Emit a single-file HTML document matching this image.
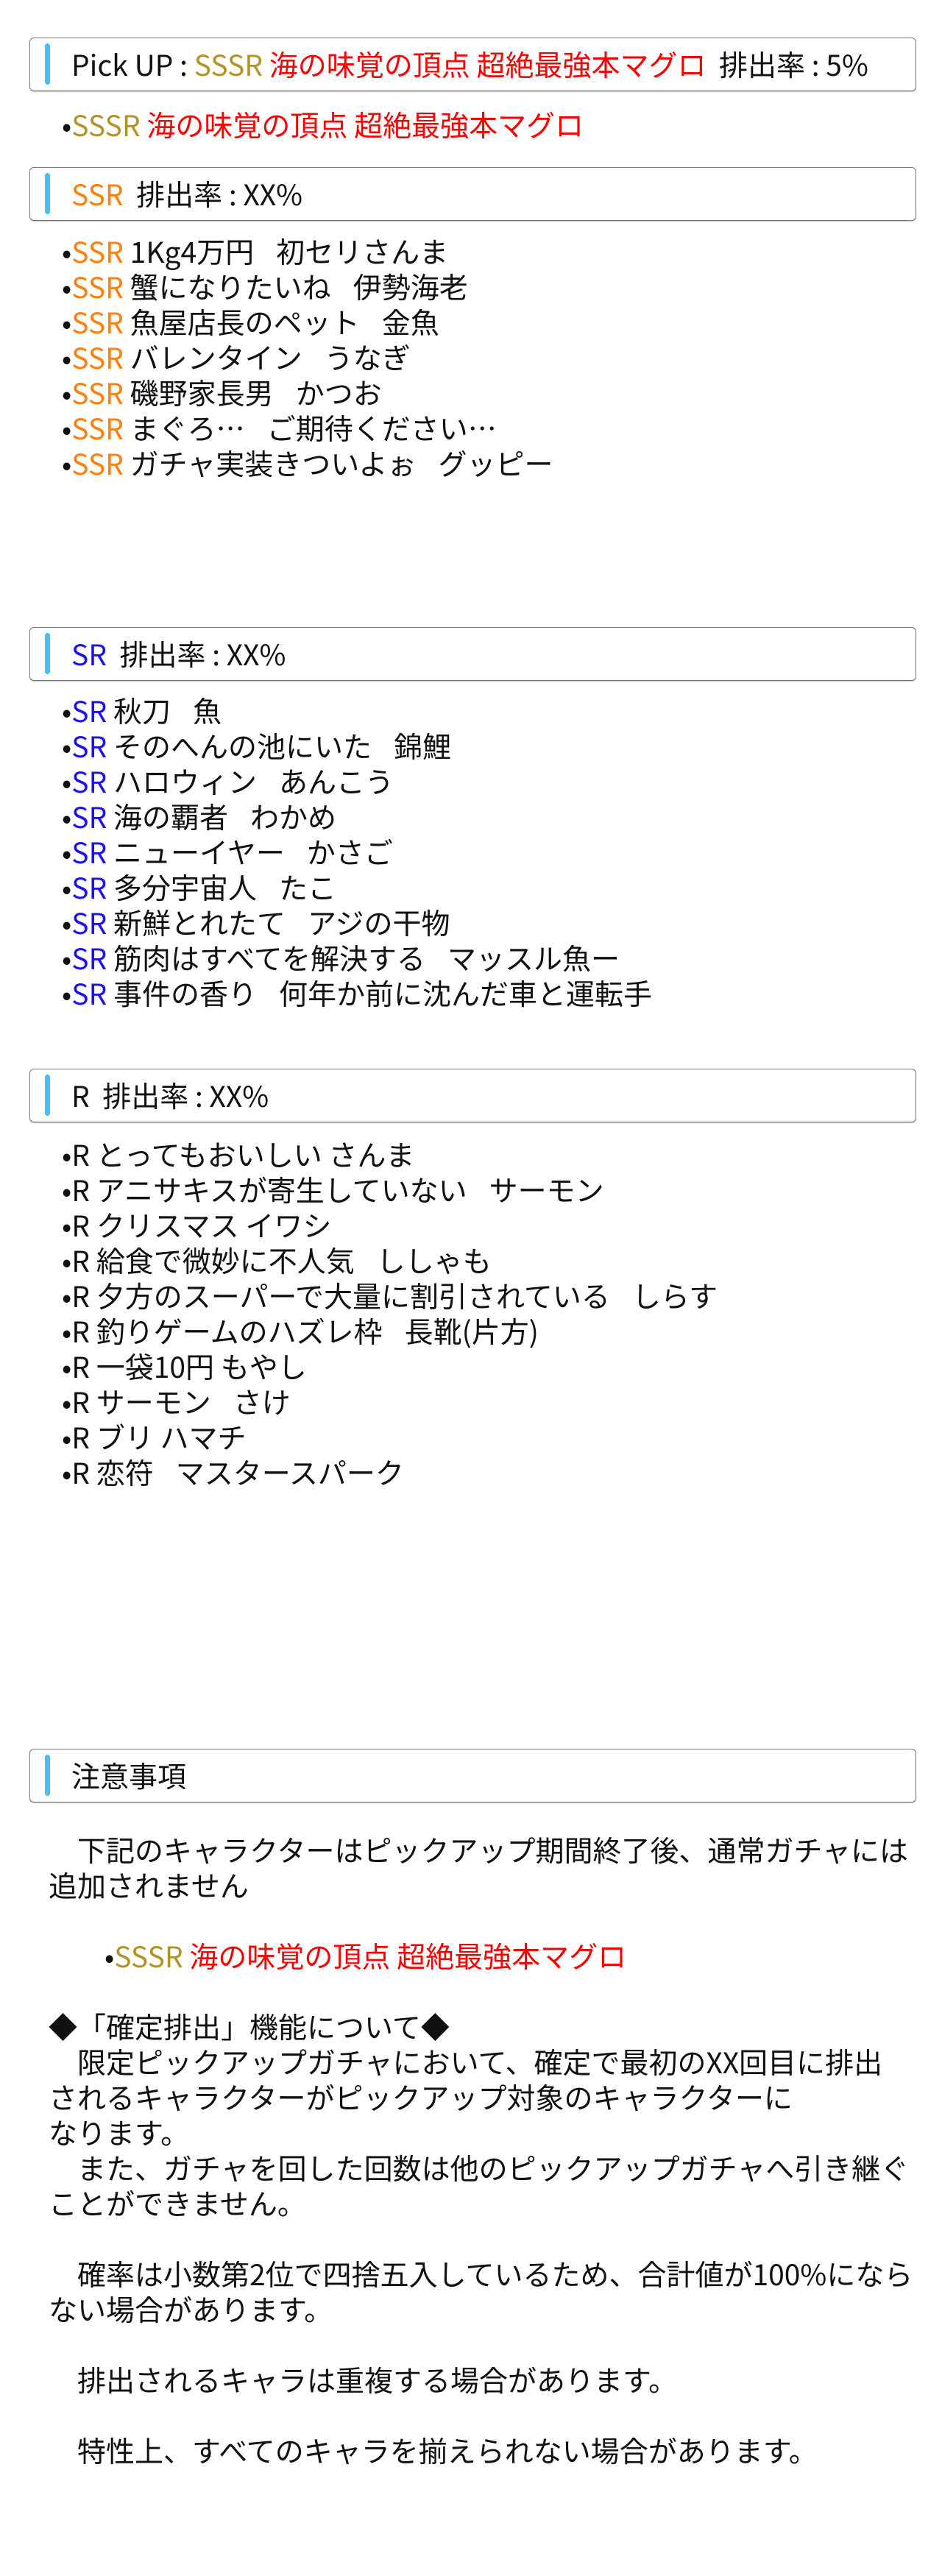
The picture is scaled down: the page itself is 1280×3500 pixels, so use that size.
<!DOCTYPE html>
<html><head><meta charset="utf-8">
<style>
html,body{margin:0;padding:0;background:#fff;}
body{width:1280px;height:3500px;position:relative;overflow:hidden;font-family:"Noto Sans CJK JP","Liberation Sans",sans-serif;font-size:39px;color:#111;}
.box{position:absolute;left:40px;width:1205px;height:73px;border:1.5px solid #777;border-radius:6px;box-sizing:border-box;box-shadow:0 1px 1px rgba(0,0,0,.25);}
.box .bar{position:absolute;left:20px;top:7px;width:7px;height:56px;border-radius:4px;background:#4cbcf8;}
.box .t{position:absolute;left:56px;top:0;line-height:70px;white-space:nowrap;}
.it{position:absolute;left:84px;line-height:48px;height:48px;white-space:nowrap;}
.g{color:#b3922a}.r{color:#ff0000}.o{color:#ff7f0f}.b{color:#1a10ff}
.n{position:absolute;left:66px;line-height:48px;white-space:nowrap;}
.s{display:inline-block;width:30px}
</style></head><body>

<div class="box" style="top:51px"><div class="bar"></div><div class="t">Pick UP : <span class="g">SSSR</span> <span class="r">海の味覚の頂点 超絶最強本マグロ</span>&nbsp;&nbsp;排出率 : 5%</div></div>
<div class="it" style="top:145px">•<span class="g">SSSR</span> <span class="r">海の味覚の頂点 超絶最強本マグロ</span></div>

<div class="box" style="top:227px"><div class="bar"></div><div class="t"><span class="o">SSR</span>&nbsp;&nbsp;排出率 : XX%</div></div>
<div class="it" style="top:317px">•<span class="o">SSR</span> 1Kg4万円<span class="s"></span>初セリさんま</div>
<div class="it" style="top:365px">•<span class="o">SSR</span> 蟹になりたいね<span class="s"></span>伊勢海老</div>
<div class="it" style="top:413px">•<span class="o">SSR</span> 魚屋店長のペット<span class="s"></span>金魚</div>
<div class="it" style="top:461px">•<span class="o">SSR</span> バレンタイン<span class="s"></span>うなぎ</div>
<div class="it" style="top:509px">•<span class="o">SSR</span> 磯野家長男<span class="s"></span>かつお</div>
<div class="it" style="top:557px">•<span class="o">SSR</span> まぐろ…<span class="s"></span>ご期待ください…</div>
<div class="it" style="top:605px">•<span class="o">SSR</span> ガチャ実装きついよぉ<span class="s"></span>グッピー</div>

<div class="box" style="top:852px"><div class="bar"></div><div class="t"><span class="b">SR</span>&nbsp;&nbsp;排出率 : XX%</div></div>
<div class="it" style="top:941px">•<span class="b">SR</span> 秋刀<span class="s"></span>魚</div>
<div class="it" style="top:989px">•<span class="b">SR</span> そのへんの池にいた<span class="s"></span>錦鯉</div>
<div class="it" style="top:1037px">•<span class="b">SR</span> ハロウィン<span class="s"></span>あんこう</div>
<div class="it" style="top:1085px">•<span class="b">SR</span> 海の覇者<span class="s"></span>わかめ</div>
<div class="it" style="top:1133px">•<span class="b">SR</span> ニューイヤー<span class="s"></span>かさご</div>
<div class="it" style="top:1181px">•<span class="b">SR</span> 多分宇宙人<span class="s"></span>たこ</div>
<div class="it" style="top:1229px">•<span class="b">SR</span> 新鮮とれたて<span class="s"></span>アジの干物</div>
<div class="it" style="top:1277px">•<span class="b">SR</span> 筋肉はすべてを解決する<span class="s"></span>マッスル魚ー</div>
<div class="it" style="top:1325px">•<span class="b">SR</span> 事件の香り<span class="s"></span>何年か前に沈んだ車と運転手</div>

<div class="box" style="top:1452px"><div class="bar"></div><div class="t">R&nbsp;&nbsp;排出率 : XX%</div></div>
<div class="it" style="top:1544px">•R とってもおいしい さんま</div>
<div class="it" style="top:1592px">•R アニサキスが寄生していない<span class="s"></span>サーモン</div>
<div class="it" style="top:1640px">•R クリスマス イワシ</div>
<div class="it" style="top:1688px">•R 給食で微妙に不人気<span class="s"></span>ししゃも</div>
<div class="it" style="top:1736px">•R 夕方のスーパーで大量に割引されている<span class="s"></span>しらす</div>
<div class="it" style="top:1784px">•R 釣りゲームのハズレ枠<span class="s"></span>長靴(片方)</div>
<div class="it" style="top:1832px">•R 一袋10円 もやし</div>
<div class="it" style="top:1880px">•R サーモン<span class="s"></span>さけ</div>
<div class="it" style="top:1928px">•R ブリ ハマチ</div>
<div class="it" style="top:1976px">•R 恋符<span class="s"></span>マスタースパーク</div>

<div class="box" style="top:2376px"><div class="bar"></div><div class="t">注意事項</div></div>
<div class="n" style="top:2489px">　下記のキャラクターはピックアップ期間終了後、通常ガチャには<br>追加されません<br><br><span style="padding-left:76px">•<span class="g">SSSR</span> <span class="r">海の味覚の頂点 超絶最強本マグロ</span></span><br><br>◆「確定排出」機能について◆<br>　限定ピックアップガチャにおいて、確定で最初のXX回目に排出<br>されるキャラクターがピックアップ対象のキャラクターに<br>なります。<br>　また、ガチャを回した回数は他のピックアップガチャへ引き継ぐ<br>ことができません。<br><br>　確率は小数第2位で四捨五入しているため、合計値が100%になら<br>ない場合があります。<br><br>　排出されるキャラは重複する場合があります。<br><br>　特性上、すべてのキャラを揃えられない場合があります。</div>

</body></html>
